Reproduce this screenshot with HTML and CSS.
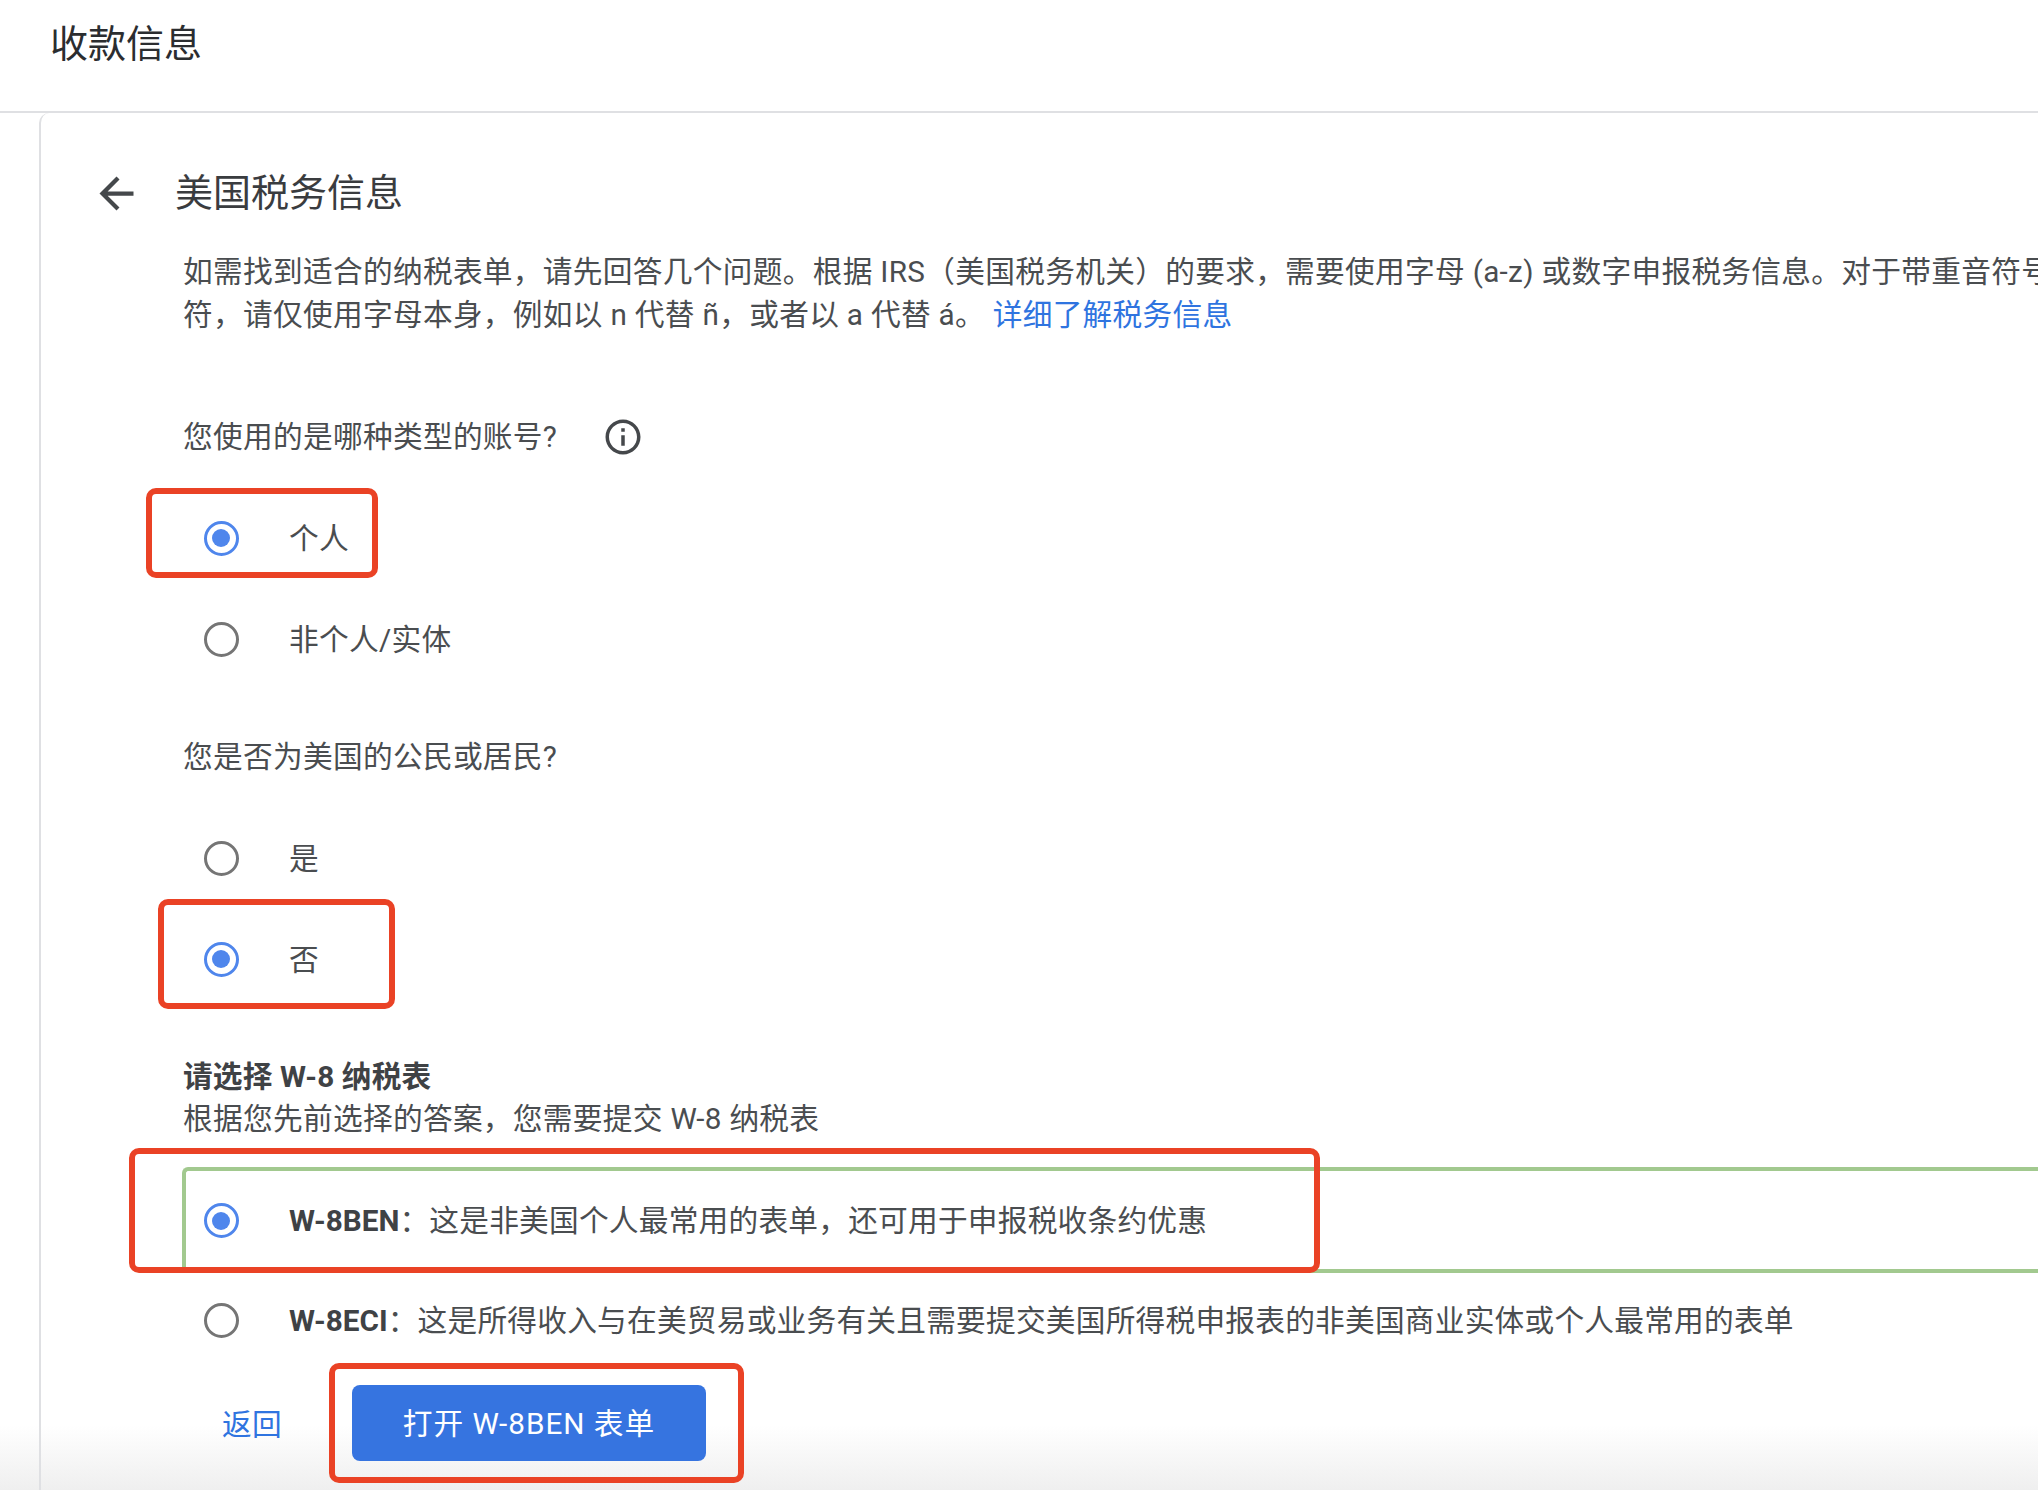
FILE: index.html
```html
<!DOCTYPE html>
<html lang="zh-CN">
<head>
<meta charset="utf-8">
<title>收款信息</title>
<link rel="stylesheet" href="styles.css">
</head>
<body>
<header class="page-header"><h1 class="page-title">收款信息</h1></header>
<main class="card">
  <div class="title-row">
    <svg class="back-icon" viewBox="0 0 24 24"><path d="M20 11H7.83l5.59-5.59L12 4l-8 8 8 8 1.41-1.41L7.83 13H20v-2z"/></svg>
    <h2 class="card-title">美国税务信息</h2>
  </div>
  <div class="content">
    <p class="intro">如需找到适合的纳税表单，请先回答几个问题。根据 IRS（美国税务机关）的要求，需要使用字母 (a-z) 或数字申报税务信息。对于带重音符号的字<br>符，请仅使用字母本身，例如以 n 代替 ñ，或者以 a 代替 á。 <a class="link" href="#">详细了解税务信息</a></p>

    <div class="question q-first">您使用的是哪种类型的账号?
      <svg class="info-icon" viewBox="0 0 24 24"><path d="M11 7h2v2h-2zm0 4h2v6h-2zm1-9C6.48 2 2 6.48 2 12s4.48 10 10 10 10-4.48 10-10S17.52 2 12 2zm0 18c-4.41 0-8-3.59-8-8s3.59-8 8-8 8 3.59 8 8-3.59 8-8 8z"/></svg>
    </div>
    <div class="option"><span class="radio on"></span><span>个人</span></div>
    <div class="option"><span class="radio"></span><span>非个人/实体</span></div>

    <div class="question">您是否为美国的公民或居民?</div>
    <div class="option"><span class="radio"></span><span>是</span></div>
    <div class="option"><span class="radio on"></span><span>否</span></div>

    <div class="form-head">
      <div class="form-head-title">请选择 W-8 纳税表</div>
      <div>根据您先前选择的答案，您需要提交 W-8 纳税表</div>
    </div>
    <div class="option option-selected"><span class="radio on"></span><span class="option-text"><b class="form-name">W-8BEN</b>：这是非美国个人最常用的表单，还可用于申报税收条约优惠</span></div>
    <div class="option option-last"><span class="radio"></span><span class="option-text"><b class="form-name">W-8ECI</b>：这是所得收入与在美贸易或业务有关且需要提交美国所得税申报表的非美国商业实体或个人最常用的表单</span></div>

    <div class="actions">
      <a class="link back-link" href="#">返回</a>
      <button class="primary-btn" type="button">打开 W-8BEN 表单</button>
    </div>
  </div>
</main>
<div class="mark mark-1"></div>
<div class="mark mark-2"></div>
<div class="mark mark-3"></div>
<div class="mark mark-4"></div>
</body>
</html>
```
FILE: styles.css
```css
* { box-sizing: border-box; }
html, body { margin: 0; height: 1490px; overflow: hidden; }
body {
  position: relative;
  background: linear-gradient(to bottom, #fff 1425px, #efefef 1490px);
  font-family: Roboto, "Noto Sans CJK SC", sans-serif;
  font-size: 29.7px;
  letter-spacing: 0.3px;
  color: #4a4d50;
}
.page-header {
  height: 113px;
  border-bottom: 2px solid #dfe0e3;
  padding-left: 50px;
}
.page-title {
  margin: 0;
  padding-top: 19px;
  font-size: 38px;
  line-height: 50px;
  font-weight: 400;
  letter-spacing: 0;
  color: #2b2d30;
}
.card {
  margin-left: 39px;
  height: 1377px;
  border-left: 2px solid #dfe0e3;
  border-top-left-radius: 10px;
  padding: 50px 0 0 50px;
  overflow: hidden;
}
.title-row { display: flex; align-items: center; height: 60px; gap: 33px; }
.back-icon { width: 51px; height: 51px; fill: #45484b; flex: none; }
.card-title {
  margin: 0;
  font-size: 38px;
  line-height: 50px;
  font-weight: 400;
  letter-spacing: 0;
  color: #3a3c3f;
}
.content { margin-left: 92px; }
.intro { margin: 27px 0 0; line-height: 43px; white-space: nowrap; }
.link { color: #2f74e0; text-decoration: none; }
.question { height: 43px; line-height: 43px; margin-top: 47px; display: flex; align-items: center; }
.q-first { margin-top: 79px; }
.info-icon { width: 42px; height: 42px; fill: #45484b; margin-left: 45px; }
.question + .option { margin-top: 28px; }
.option {
  display: flex;
  align-items: center;
  gap: 50.5px;
  height: 101px;
  padding-left: 20.5px;
  white-space: nowrap;
}
.radio {
  width: 35px;
  height: 35px;
  flex: none;
  margin-top: 3px;
  border: 3.5px solid #757575;
  border-radius: 50%;
  display: flex;
  align-items: center;
  justify-content: center;
}
.radio.on { border-color: #4f86ec; }
.radio.on::after {
  content: "";
  width: 18px;
  height: 18px;
  border-radius: 50%;
  background: #4f86ec;
}
.form-head { margin-top: 48px; line-height: 42px; }
.form-head-title { font-weight: 700; color: #3f4245; letter-spacing: 0.15px; }
.form-name { font-weight: 700; color: #3f4245; letter-spacing: 0; }
.option-selected {
  margin: 27px 0 0 -1px;
  height: 106px;
  border: 4px solid #a2c98f;
  border-right: 0;
  border-radius: 6px 0 0 6px;
  padding-left: 17.5px;
}
.option-selected .radio, .option-last .radio { margin-top: 1px; }
.option-text { margin-top: -3px; letter-spacing: 0.23px; }
.option-last { height: 94px; }
.actions { display: flex; align-items: center; margin-top: 18px; }
.back-link { margin: 0 0 2px 39px; width: 130px; }
.primary-btn {
  width: 354px;
  height: 76px;
  border: 0;
  border-radius: 8px;
  background: #3674e0;
  color: #fff;
  font: inherit;
  letter-spacing: 1px;
  padding: 0 0 4px;
}
.mark {
  position: absolute;
  border: 6px solid #ea4225;
  border-radius: 10px;
}
.mark-1 { left: 146px; top: 488px; width: 232px; height: 90px; }
.mark-2 { left: 158px; top: 899px; width: 237px; height: 110px; }
.mark-3 { left: 129px; top: 1148px; width: 1191px; height: 125px; }
.mark-4 { left: 329px; top: 1363px; width: 415px; height: 120px; }
```
